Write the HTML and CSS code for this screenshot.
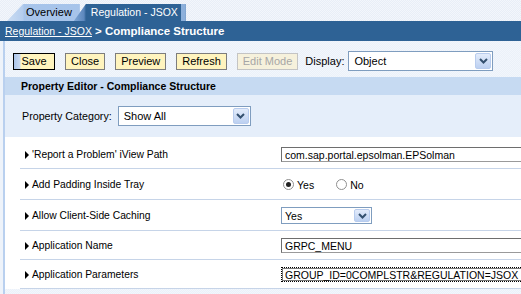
FILE: index.html
```html
<!DOCTYPE html>
<html lang="en">
<head>
  <meta charset="UTF-8" />
  <title>Compliance Structure</title>
  <link rel="stylesheet" href="styles.css">
</head>
<body>
  <div class="tabs">
    <div class="tab">Overview</div>
    <div class="tab active">Regulation - JSOX</div>
  </div>
  <div class="crumb"><a href="#">Regulation - JSOX</a> <b>&gt; Compliance Structure</b></div>

  <div class="main">
    <div class="toolbar">
      <button class="btn focus">Save</button>
      <button class="btn">Close</button>
      <button class="btn">Preview</button>
      <button class="btn">Refresh</button>
      <button class="btn" disabled>Edit Mode</button>
      <span class="disp-label">Display:</span>
      <div class="dropdown display">
        <span>Object</span>
        <i class="arrow"><svg width="9" height="6" viewBox="0 0 9 6"><path d="M1 1L4.5 4.5L8 1" fill="none" stroke="#34506f" stroke-width="2"/></svg></i>
      </div>
    </div>

    <div class="editor-title">Property Editor - Compliance Structure</div>

    <div class="category">
      <span class="cat-label">Property Category:</span>
      <div class="dropdown cat">
        <span>Show All</span>
        <i class="arrow"><svg width="9" height="6" viewBox="0 0 9 6"><path d="M1 1L4.5 4.5L8 1" fill="none" stroke="#34506f" stroke-width="2"/></svg></i>
      </div>
    </div>

    <div class="props">
      <div class="row first">
        <div class="name"><span class="tri"></span>'Report a Problem' iView Path</div>
        <div class="value"><input class="field" type="text" value="com.sap.portal.epsolman.EPSolman" /></div>
      </div>
      <div class="row">
        <div class="name"><span class="tri"></span>Add Padding Inside Tray</div>
        <div class="value radios">
          <label class="radio"><span class="dot on"></span>Yes</label>
          <label class="radio"><span class="dot"></span>No</label>
        </div>
      </div>
      <div class="row">
        <div class="name"><span class="tri"></span>Allow Client-Side Caching</div>
        <div class="value">
          <div class="dropdown small">
            <span>Yes</span>
            <i class="arrow"><svg width="9" height="6" viewBox="0 0 9 6"><path d="M1 1L4.5 4.5L8 1" fill="none" stroke="#34506f" stroke-width="2"/></svg></i>
          </div>
        </div>
      </div>
      <div class="row">
        <div class="name"><span class="tri"></span>Application Name</div>
        <div class="value"><input class="field" type="text" value="GRPC_MENU" /></div>
      </div>
      <div class="row">
        <div class="name"><span class="tri"></span>Application Parameters</div>
        <div class="value"><input class="field focused" type="text" value="GROUP_ID=0COMPLSTR&amp;REGULATION=JSOX" /></div>
      </div>
    </div>
  </div>
</body>
</html>
```

FILE: styles.css
```css
body {
  margin: 0;
  font-family: "Liberation Sans", Arial, sans-serif;
  font-size: 11px;
  color: #000;
  background: #eef3fa;
  overflow: hidden;
}

/* tab strip */
.tabs {
  display: flex;
  height: 21px;
  padding: 4px 0 0 7px;
  box-sizing: border-box;
  background-color: #eef2f9;
  background-image: repeating-conic-gradient(#e8eef7 0 25%, #f3f6fb 0 50%);
  background-size: 2px 2px;
}

.tab {
  height: 17px;
  line-height: 17px;
  padding: 0 8px 0 19px;
  background: linear-gradient(to right, #cadcf2 0, #b4cdee 16px, #a7c4ea 17px);
  clip-path: polygon(16px 0, 100% 0, 100% 100%, 0 100%);
}

.tab.active {
  margin-left: -6px;
  padding: 0 8px 0 17px;
  font-size: 10.5px;
  color: #fff;
  background: linear-gradient(to right, #7fa6d6 0, #5d88bd 10px, #2e6295 12px);
  box-shadow: inset -5px 0 #8db0db;
  clip-path: polygon(12px 0, 100% 0, 100% 100%, 0 100%);
}

.crumb {
  height: 20px;
  line-height: 20px;
  padding-left: 5px;
  background: #2e6295;
  color: #fff;
}

.crumb a {
  color: #fff;
  font-size: 10.5px;
}

.crumb b {
  font-size: 11.5px;
}

/* main area */
.main {
  margin-left: 3px;
  border-left: 2px solid #b9d0ef;
  min-height: 260px;
  background-color: #eef3fa;
  background-image: repeating-conic-gradient(#ebf1f9 0 25%, #f2f6fc 0 50%);
  background-size: 2px 2px;
}

.toolbar {
  display: flex;
  align-items: center;
  gap: 10px;
  height: 36px;
  padding: 4px 0 0 8px;
  box-sizing: border-box;
}

.btn {
  height: 17px;
  padding: 0 5px;
  font-family: inherit;
  font-size: 11px;
  color: #000;
  background: #fff4be;
  border: 1px solid #7d7d7d;
  border-radius: 0;
}

.btn.focus {
  min-width: 42px;
  border-color: #000;
  background: linear-gradient(to right, #aac4ea 0, #c9d9f0 6px, #fff4be 7px);
}

.btn:disabled {
  color: #a6a6a6;
  background: #f6f1dc;
  border-color: #c4c4c4;
}

.disp-label {
  margin-left: -3px;
  margin-right: -6px;
}

.dropdown {
  display: flex;
  align-items: center;
  justify-content: space-between;
  box-sizing: border-box;
  height: 20px;
  padding: 1px 1px 1px 5px;
  background: #fff;
  border: 1px solid #7f9dbf;
}

.dropdown.display { width: 145px; }
.dropdown.cat { width: 133px; }
.dropdown.small { width: 91px; height: 17px; padding-left: 3px; font-size: 10.5px; }

.arrow {
  display: flex;
  align-items: center;
  justify-content: center;
  width: 16px;
  height: 100%;
  box-sizing: border-box;
  border: 1px solid #b8ccee;
  border-radius: 2px;
  background: linear-gradient(#e3ecfb, #bcd0f1);
}

/* property editor */
.editor-title {
  height: 18px;
  line-height: 18px;
  padding-left: 16px;
  font-size: 10.5px;
  font-weight: bold;
  background: #c6daf2;
}

.category {
  display: flex;
  align-items: center;
  gap: 6px;
  height: 42px;
  padding-left: 17px;
  background: #e5eefa;
}

.cat-label {
  font-size: 10.7px;
}

.props {
  background: #fff;
  padding: 2px 0 0 15px;
}

.row {
  display: flex;
  align-items: center;
  padding: 7px 0 6px;
  border-bottom: 1px solid #c6d4e8;
}

.row.first {
  padding-top: 8px;
}

.name {
  width: 261px;
  flex: none;
  padding-left: 5px;
  box-sizing: border-box;
  display: flex;
  align-items: center;
  font-size: 10.3px;
}

.tri {
  width: 0;
  height: 0;
  margin-right: 3px;
  border-top: 4px solid transparent;
  border-bottom: 4px solid transparent;
  border-left: 4px solid #000;
}

.value {
  flex: 1;
  font-size: 10.5px;
}

.field {
  display: block;
  width: 260px;
  height: 15px;
  box-sizing: border-box;
  padding: 0 3px;
  font-family: inherit;
  font-size: 10.5px;
  border: 1px solid #9a9a9a;
  border-top-color: #6e6e6e;
  border-left-color: #6e6e6e;
  outline: none;
}

.field.focused {
  border: 1px dotted #000;
  box-shadow: inset 0 0 0 1px #777;
}

.radios {
  display: flex;
  gap: 22px;
  height: 17px;
  align-items: center;
  padding-left: 2px;
}

.radio {
  display: flex;
  align-items: center;
  gap: 3px;
}

.dot {
  position: relative;
  width: 9px;
  height: 9px;
  border: 1px solid #8f8f8f;
  border-radius: 50%;
  background: #fff;
}

.dot.on::after {
  content: "";
  position: absolute;
  left: 2px;
  top: 2px;
  width: 5px;
  height: 5px;
  border-radius: 50%;
  background: #222;
}
```
